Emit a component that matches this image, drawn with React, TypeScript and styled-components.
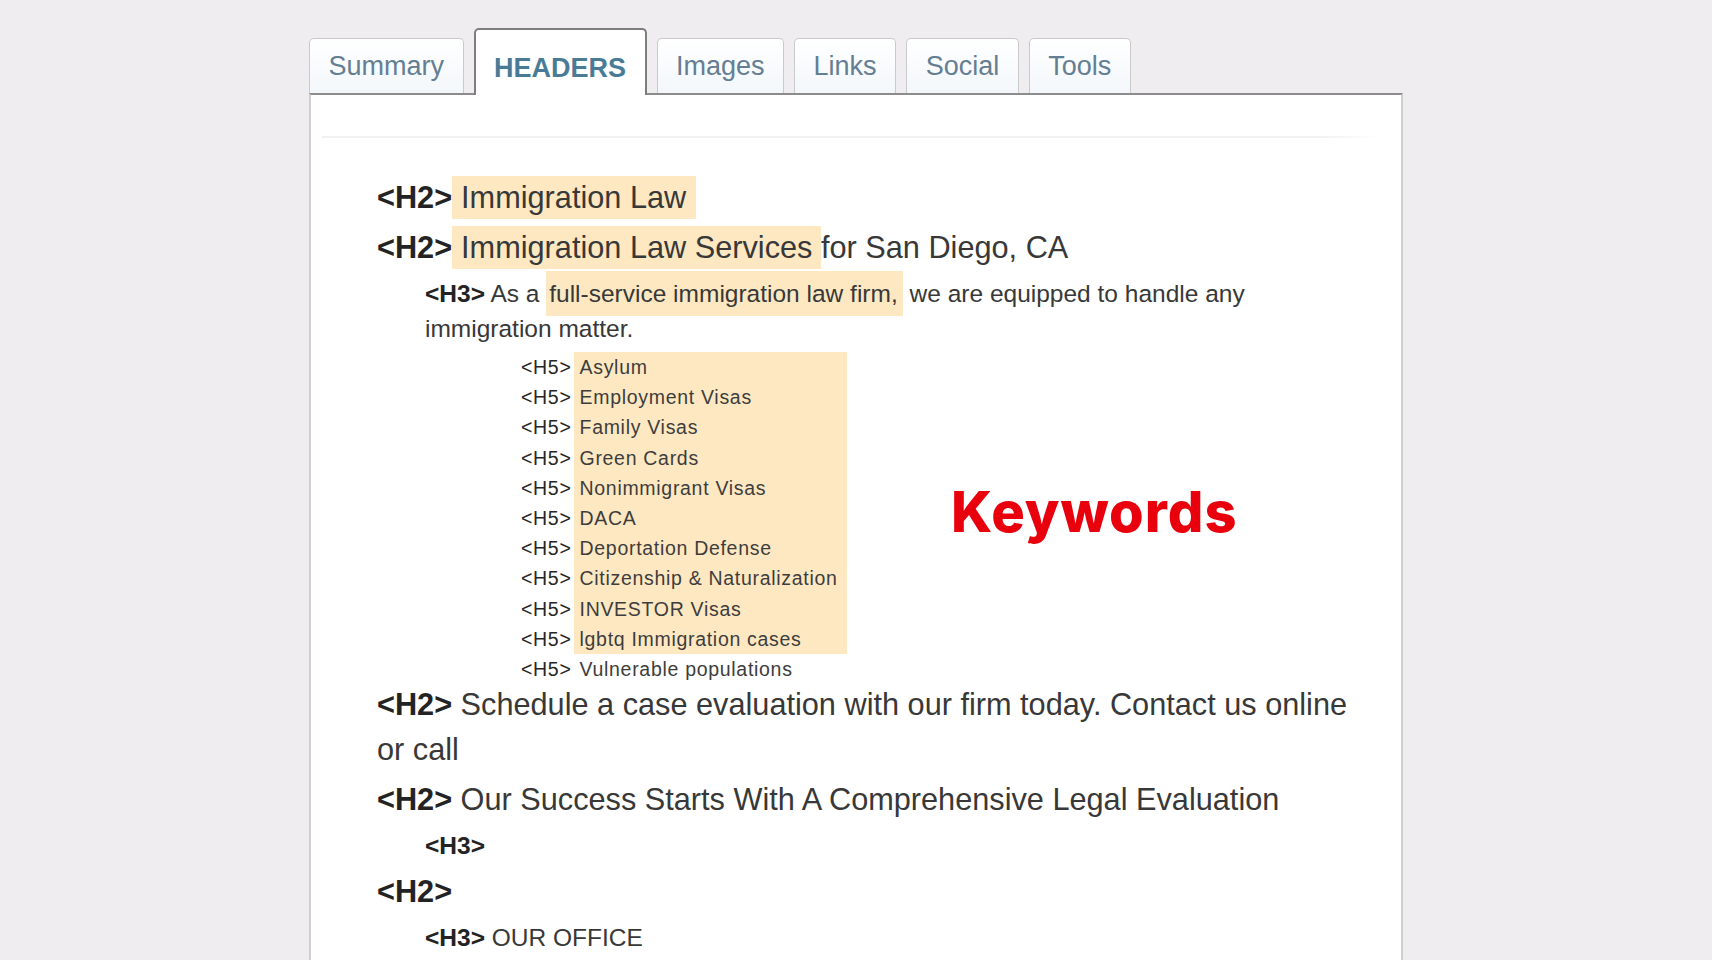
import React from 'react';
import styled, { createGlobalStyle } from 'styled-components';

const GlobalStyle = createGlobalStyle`
  html, body {
    margin: 0;
    padding: 0;
    background: #efedf0;
    font-family: "Liberation Sans", Arial, sans-serif;
  }
`;

const Page = styled.div`
  padding: 28px 0 0 309px;
  min-height: 960px;
  box-sizing: border-box;
  overflow: hidden;
`;

const TabBar = styled.div`
  display: flex;
  align-items: flex-end;
  gap: 10px;
  position: relative;
  z-index: 2;
`;

const Tab = styled.div<{ $active?: boolean }>`
  box-sizing: border-box;
  padding: 0 18.5px;
  font-size: 27px;
  line-height: 31px;
  border-radius: 5px 5px 0 0;
  border: ${(p) => (p.$active ? '2px solid #7e7e7e' : '1.5px solid #cacaca')};
  border-bottom: none;
  background: ${(p) => (p.$active ? '#ffffff' : 'linear-gradient(#ffffff, #f3f7fb)')};
  color: ${(p) => (p.$active ? '#4a7b96' : '#647e93')};
  font-weight: ${(p) => (p.$active ? 700 : 400)};
  height: ${(p) => (p.$active ? '67px' : '55px')};
  margin-bottom: ${(p) => (p.$active ? '-2px' : '0')};
  padding-top: ${(p) => (p.$active ? '23px' : '12px')};
`;

const Panel = styled.div`
  position: relative;
  z-index: 1;
  box-sizing: border-box;
  width: 1094px;
  min-height: 880px;
  background: #ffffff;
  border-top: 2px solid #8c8c8c;
  border-left: 2px solid #cfcfcf;
  border-right: 2px solid #cfcfcf;
  padding-top: 41px;
`;

const Separator = styled.div`
  height: 2px;
  margin: 0 21px 0 11px;
  background: linear-gradient(90deg, #f1f1f1 0%, #f1f1f1 94%, #ffffff 100%);
`;

const Outline = styled.div`
  display: flex;
  flex-direction: column;
  padding: 34px 36px 0 66px;
  color: #383838;
`;

const H2Row = styled.div`
  font-size: 30.7px;
  line-height: 45px;
  padding: 2.5px 0;
`;

const H3Row = styled.div`
  font-size: 24.5px;
  line-height: 35px;
  padding: 3.5px 0 3.5px 48px;
`;

const Tag = styled.span`
  color: #232323;
  font-weight: 700;
`;

const Mark = styled.span<{ $pad: string }>`
  background: #fde8c2;
  padding: ${(p) => p.$pad};
`;

const H5List = styled.div`
  display: grid;
  grid-template-columns: max-content max-content;
  justify-content: start;
  padding-left: 144px;
  margin: 3px 0 -5px;
  font-size: 19.5px;
  letter-spacing: 0.7px;
  line-height: 30.2px;
`;

const H5Tag = styled.span`
  color: #262626;
  padding-right: 2px;
`;

const H5Text = styled.span<{ $hl: boolean }>`
  color: #3d3d3d;
  padding: 0 9px 0 6px;
  background: ${(p) => (p.$hl ? '#fde8c2' : 'transparent')};
`;

const Keywords = styled.div`
  position: absolute;
  left: 640px;
  top: 389px;
  font-family: Inter, "Open Sans", sans-serif;
  font-weight: 800;
  font-size: 56px;
  line-height: 1;
  letter-spacing: 1px;
  color: #e8000d;
`;

const tabs = ['Summary', 'HEADERS', 'Images', 'Links', 'Social', 'Tools'];

const h5Items = [
  'Asylum',
  'Employment Visas',
  'Family Visas',
  'Green Cards',
  'Nonimmigrant Visas',
  'DACA',
  'Deportation Defense',
  'Citizenship & Naturalization',
  'INVESTOR Visas',
  'lgbtq Immigration cases',
];

const App: React.FC = () => {
  return (
    <>
      <GlobalStyle />
      <Page>
        <TabBar>
          {tabs.map((t) => (
            <Tab key={t} $active={t === 'HEADERS'}>
              {t}
            </Tab>
          ))}
        </TabBar>
        <Panel>
          <Separator />
          <Outline>
            <H2Row>
              <Tag>&lt;H2&gt;</Tag>
              <Mark $pad="4px 10px 4px 9px">Immigration Law</Mark>
            </H2Row>
            <H2Row>
              <Tag>&lt;H2&gt;</Tag>
              <Mark $pad="4px 0 4px 9px">Immigration Law Services </Mark>for San Diego, CA
            </H2Row>
            <H3Row>
              <Tag>&lt;H3&gt;</Tag> As a <Mark $pad="9px 5px 9px 3px">full-service immigration law firm,</Mark> we are
              equipped to handle any immigration matter.
            </H3Row>
            <H5List>
              {h5Items.map((item) => (
                <React.Fragment key={item}>
                  <H5Tag>&lt;H5&gt;</H5Tag>
                  <H5Text $hl>{item}</H5Text>
                </React.Fragment>
              ))}
              <H5Tag>&lt;H5&gt;</H5Tag>
              <H5Text $hl={false}>Vulnerable populations</H5Text>
            </H5List>
            <H2Row>
              <Tag>&lt;H2&gt;</Tag> Schedule a case evaluation with our firm today. Contact us online or call
            </H2Row>
            <H2Row>
              <Tag>&lt;H2&gt;</Tag> Our Success Starts With A Comprehensive Legal Evaluation
            </H2Row>
            <H3Row>
              <Tag>&lt;H3&gt;</Tag>
            </H3Row>
            <H2Row>
              <Tag>&lt;H2&gt;</Tag>
            </H2Row>
            <H3Row>
              <Tag>&lt;H3&gt;</Tag> OUR OFFICE
            </H3Row>
          </Outline>
          <Keywords>Keywords</Keywords>
        </Panel>
      </Page>
    </>
  );
};

export default App;
